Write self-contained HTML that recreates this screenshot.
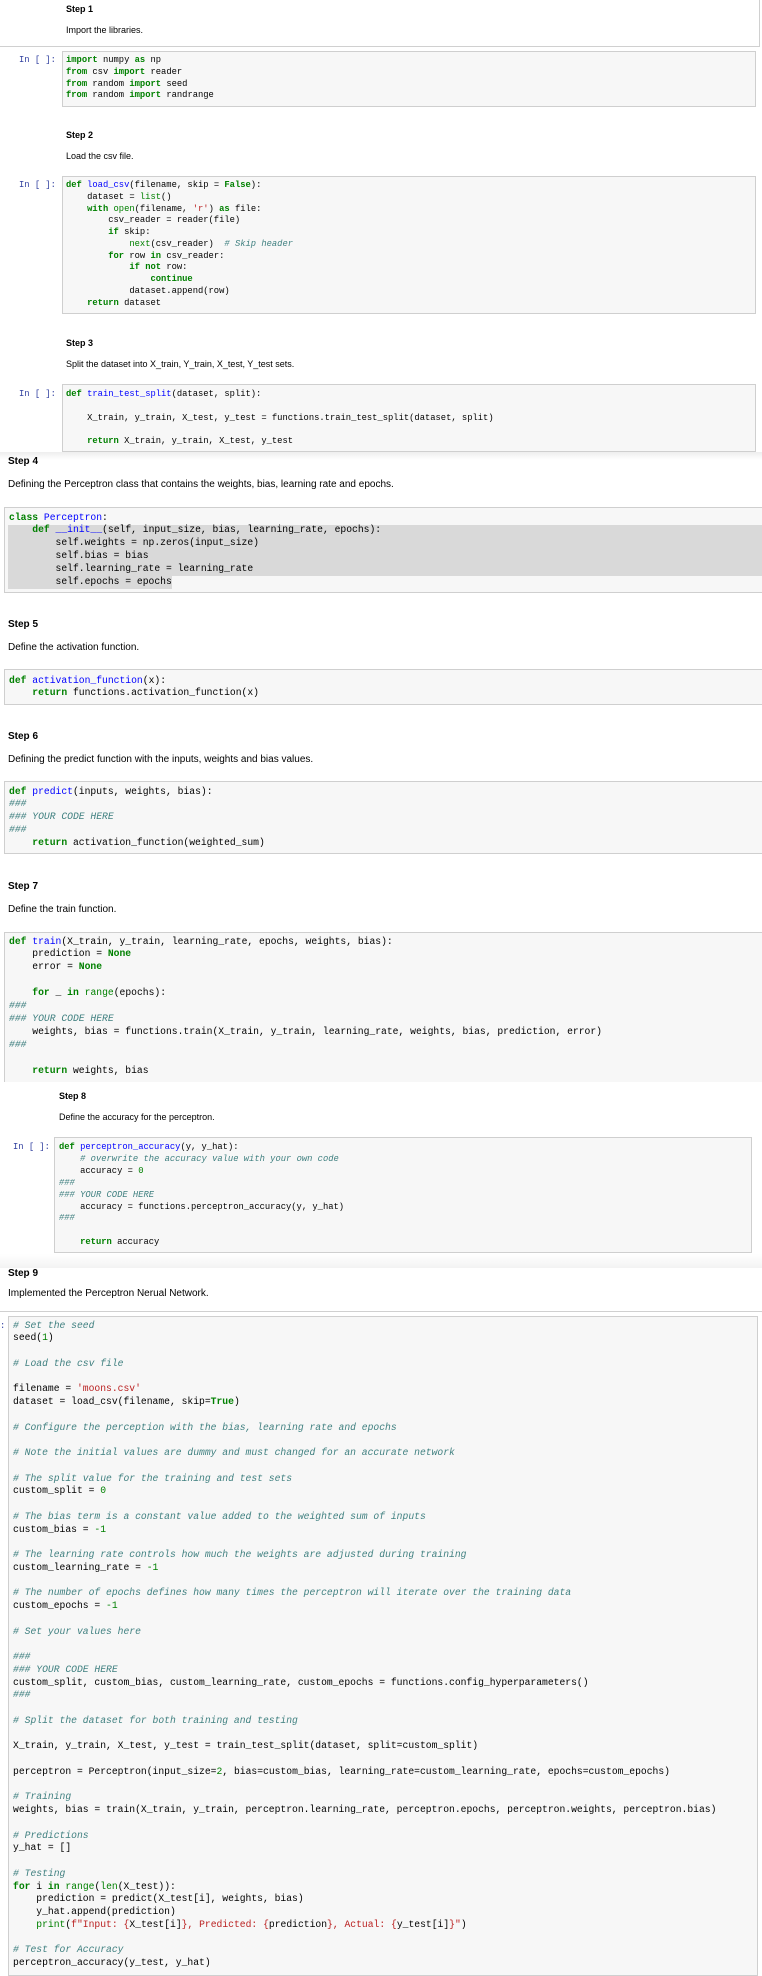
<!DOCTYPE html>
<html><head><meta charset="utf-8"><style>
html,body{margin:0;padding:0;background:#fff;}
body{position:relative;width:762px;height:1969px;overflow:hidden;font-family:"Liberation Sans",Arial,sans-serif;color:#000;}
.a{position:absolute;white-space:pre;}
.h{font-weight:bold;}
.box{position:absolute;background:#f7f7f7;border:1px solid #cfcfcf;box-sizing:border-box;}
pre{position:absolute;margin:0;font-family:"Liberation Mono","DejaVu Sans Mono",monospace;color:#000;}
.s1{font-size:8.8px;line-height:11.75px;}
.s2{font-size:9.7px;}
.k{color:#008000;font-weight:bold;}
.b{color:#008000;}
.f{color:#0000ff;}
.c{color:#408080;font-style:italic;}
.s{color:#ba2121;}
.n{color:#008000;}
.p{color:#303f9f;font-family:"Liberation Mono",monospace;font-size:8.8px;}
</style></head><body>

<!-- Section 1-3 (smaller scale) -->
<div class="a h" style="left:66px;top:4px;font-size:9px;">Step 1</div>
<div class="a" style="left:66px;top:25px;font-size:9px;">Import the libraries.</div>
<div style="position:absolute;left:0;top:46px;width:760px;height:1px;background:#d0d0d0"></div>
<div style="position:absolute;left:759px;top:0;width:1px;height:47px;background:#d0d0d0"></div>

<div class="box" style="left:62px;top:51px;width:694px;height:56px;"></div>
<div class="a p" style="left:19px;top:55px;line-height:11.75px;">In [ ]:</div>
<pre class="s1" style="left:66px;top:55px;"><span class="k">import</span> numpy <span class="k">as</span> np
<span class="k">from</span> csv <span class="k">import</span> reader
<span class="k">from</span> random <span class="k">import</span> seed
<span class="k">from</span> random <span class="k">import</span> randrange</pre>

<div class="a h" style="left:66px;top:130px;font-size:9px;">Step 2</div>
<div class="a" style="left:66px;top:151px;font-size:9px;">Load the csv file.</div>

<div class="box" style="left:62px;top:176px;width:694px;height:138px;"></div>
<div class="a p" style="left:19px;top:180px;line-height:11.75px;">In [ ]:</div>
<pre class="s1" style="left:66px;top:180px;"><span class="k">def</span> <span class="f">load_csv</span>(filename, skip = <span class="k">False</span>):
    dataset = <span class="b">list</span>()
    <span class="k">with</span> <span class="b">open</span>(filename, <span class="s">'r'</span>) <span class="k">as</span> file:
        csv_reader = reader(file)
        <span class="k">if</span> skip:
            <span class="b">next</span>(csv_reader)  <span class="c"># Skip header</span>
        <span class="k">for</span> row <span class="k">in</span> csv_reader:
            <span class="k">if</span> <span class="k">not</span> row:
                <span class="k">continue</span>
            dataset.append(row)
    <span class="k">return</span> dataset</pre>

<div class="a h" style="left:66px;top:338px;font-size:9px;">Step 3</div>
<div class="a" style="left:66px;top:359px;font-size:9px;">Split the dataset into X_train, Y_train, X_test, Y_test sets.</div>

<div class="box" style="left:62px;top:384px;width:694px;height:68px;"></div>
<div class="a p" style="left:19px;top:389px;line-height:11.75px;">In [ ]:</div>
<pre class="s1" style="left:66px;top:389px;"><span class="k">def</span> <span class="f">train_test_split</span>(dataset, split):

    X_train, y_train, X_test, y_test = functions.train_test_split(dataset, split)

    <span class="k">return</span> X_train, y_train, X_test, y_test</pre>
<div style="position:absolute;left:0;top:452px;width:762px;height:8px;background:linear-gradient(#eee,#fff)"></div>

<!-- Section 4-7 -->
<div class="a h" style="left:8px;top:456px;font-size:10px;">Step 4</div>
<div class="a" style="left:8px;top:479px;font-size:10px;">Defining the Perceptron class that contains the weights, bias, learning rate and epochs.</div>

<div class="box" style="left:4px;top:507px;width:760px;height:86px;"></div>
<div style="position:absolute;left:8px;top:525px;width:754px;height:51px;background:#d9d9d9"></div>
<div style="position:absolute;left:8px;top:576px;width:164px;height:13px;background:#d9d9d9"></div>
<pre class="s2" style="left:9px;top:511.6px;line-height:12.8px;"><span class="k">class</span> <span class="f">Perceptron</span>:
    <span class="k">def</span> <span class="f">__init__</span>(self, input_size, bias, learning_rate, epochs):
        self.weights = np.zeros(input_size)
        self.bias = bias
        self.learning_rate = learning_rate
        self.epochs = epochs</pre>

<div class="a h" style="left:8px;top:619px;font-size:10px;">Step 5</div>
<div class="a" style="left:8px;top:642px;font-size:10px;">Define the activation function.</div>

<div class="box" style="left:4px;top:669px;width:760px;height:36px;"></div>
<pre class="s2" style="left:9px;top:674.6px;line-height:12.8px;"><span class="k">def</span> <span class="f">activation_function</span>(x):
    <span class="k">return</span> functions.activation_function(x)</pre>

<div class="a h" style="left:8px;top:731px;font-size:10px;">Step 6</div>
<div class="a" style="left:8px;top:754px;font-size:10px;">Defining the predict function with the inputs, weights and bias values.</div>

<div class="box" style="left:4px;top:781px;width:760px;height:73px;"></div>
<pre class="s2" style="left:9px;top:785.6px;line-height:12.8px;"><span class="k">def</span> <span class="f">predict</span>(inputs, weights, bias):
<span class="c">###</span>
<span class="c">### YOUR CODE HERE</span>
<span class="c">###</span>
    <span class="k">return</span> activation_function(weighted_sum)</pre>

<div class="a h" style="left:8px;top:881px;font-size:10px;">Step 7</div>
<div class="a" style="left:8px;top:904px;font-size:10px;">Define the train function.</div>

<div class="box" style="left:4px;top:932px;width:760px;height:152px;border-bottom:none;"></div>
<pre class="s2" style="left:9px;top:935.5px;line-height:12.9px;"><span class="k">def</span> <span class="f">train</span>(X_train, y_train, learning_rate, epochs, weights, bias):
    prediction = <span class="k">None</span>
    error = <span class="k">None</span>

    <span class="k">for</span> _ <span class="k">in</span> <span class="b">range</span>(epochs):
<span class="c">###</span>
<span class="c">### YOUR CODE HERE</span>
    weights, bias = functions.train(X_train, y_train, learning_rate, weights, bias, prediction, error)
<span class="c">###</span>

    <span class="k">return</span> weights, bias</pre>

<!-- Step 8 (smaller) -->
<div style="position:absolute;left:0;top:1082px;width:762px;height:170px;background:#fff"></div>
<div class="a h" style="left:59px;top:1091px;font-size:9px;">Step 8</div>
<div class="a" style="left:59px;top:1112px;font-size:9px;">Define the accuracy for the perceptron.</div>

<div class="box" style="left:54px;top:1137px;width:698px;height:116px;"></div>
<div class="a p" style="left:13px;top:1142px;line-height:11.9px;">In [ ]:</div>
<pre class="s1" style="left:59px;top:1142px;line-height:11.9px;"><span class="k">def</span> <span class="f">perceptron_accuracy</span>(y, y_hat):
    <span class="c"># overwrite the accuracy value with your own code</span>
    accuracy = <span class="n">0</span>
<span class="c">###</span>
<span class="c">### YOUR CODE HERE</span>
    accuracy = functions.perceptron_accuracy(y, y_hat)
<span class="c">###</span>

    <span class="k">return</span> accuracy</pre>

<div style="position:absolute;left:0;top:1254px;width:762px;height:14px;background:linear-gradient(#fff,#f3f3f3)"></div>

<!-- Step 9 -->
<div class="a h" style="left:8px;top:1268px;font-size:10px;">Step 9</div>
<div style="position:absolute;left:0;top:1254px;width:762px;height:14px;background:linear-gradient(#fff,#f3f3f3)"></div>
<div class="a" style="left:8px;top:1288px;font-size:10px;">Implemented the Perceptron Nerual Network.</div>
<div style="position:absolute;left:0;top:1311px;width:762px;height:1px;background:#d0d0d0"></div>

<div class="box" style="left:8px;top:1316px;width:750px;height:660px;"></div>
<div class="a p" style="left:0px;top:1320px;line-height:12.75px;color:#303f9f">:</div>
<pre class="s2" style="left:13px;top:1319.6px;line-height:12.75px;"><span class="c"># Set the seed</span>
seed(<span class="n">1</span>)

<span class="c"># Load the csv file</span>

filename = <span class="s">'moons.csv'</span>
dataset = load_csv(filename, skip=<span class="k">True</span>)

<span class="c"># Configure the perception with the bias, learning rate and epochs</span>

<span class="c"># Note the initial values are dummy and must changed for an accurate network</span>

<span class="c"># The split value for the training and test sets</span>
custom_split = <span class="n">0</span>

<span class="c"># The bias term is a constant value added to the weighted sum of inputs</span>
custom_bias = <span class="n">-1</span>

<span class="c"># The learning rate controls how much the weights are adjusted during training</span>
custom_learning_rate = <span class="n">-1</span>

<span class="c"># The number of epochs defines how many times the perceptron will iterate over the training data</span>
custom_epochs = <span class="n">-1</span>

<span class="c"># Set your values here</span>

<span class="c">###</span>
<span class="c">### YOUR CODE HERE</span>
custom_split, custom_bias, custom_learning_rate, custom_epochs = functions.config_hyperparameters()
<span class="c">###</span>

<span class="c"># Split the dataset for both training and testing</span>

X_train, y_train, X_test, y_test = train_test_split(dataset, split=custom_split)

perceptron = Perceptron(input_size=<span class="n">2</span>, bias=custom_bias, learning_rate=custom_learning_rate, epochs=custom_epochs)

<span class="c"># Training</span>
weights, bias = train(X_train, y_train, perceptron.learning_rate, perceptron.epochs, perceptron.weights, perceptron.bias)

<span class="c"># Predictions</span>
y_hat = []

<span class="c"># Testing</span>
<span class="k">for</span> i <span class="k">in</span> <span class="b">range</span>(<span class="b">len</span>(X_test)):
    prediction = predict(X_test[i], weights, bias)
    y_hat.append(prediction)
    <span class="b">print</span>(<span class="s">f"Input: </span><span class="s">{</span>X_test[i]<span class="s">}</span><span class="s">, Predicted: </span><span class="s">{</span>prediction<span class="s">}</span><span class="s">, Actual: </span><span class="s">{</span>y_test[i]<span class="s">}</span><span class="s">"</span>)

<span class="c"># Test for Accuracy</span>
perceptron_accuracy(y_test, y_hat)</pre>

</body></html>
